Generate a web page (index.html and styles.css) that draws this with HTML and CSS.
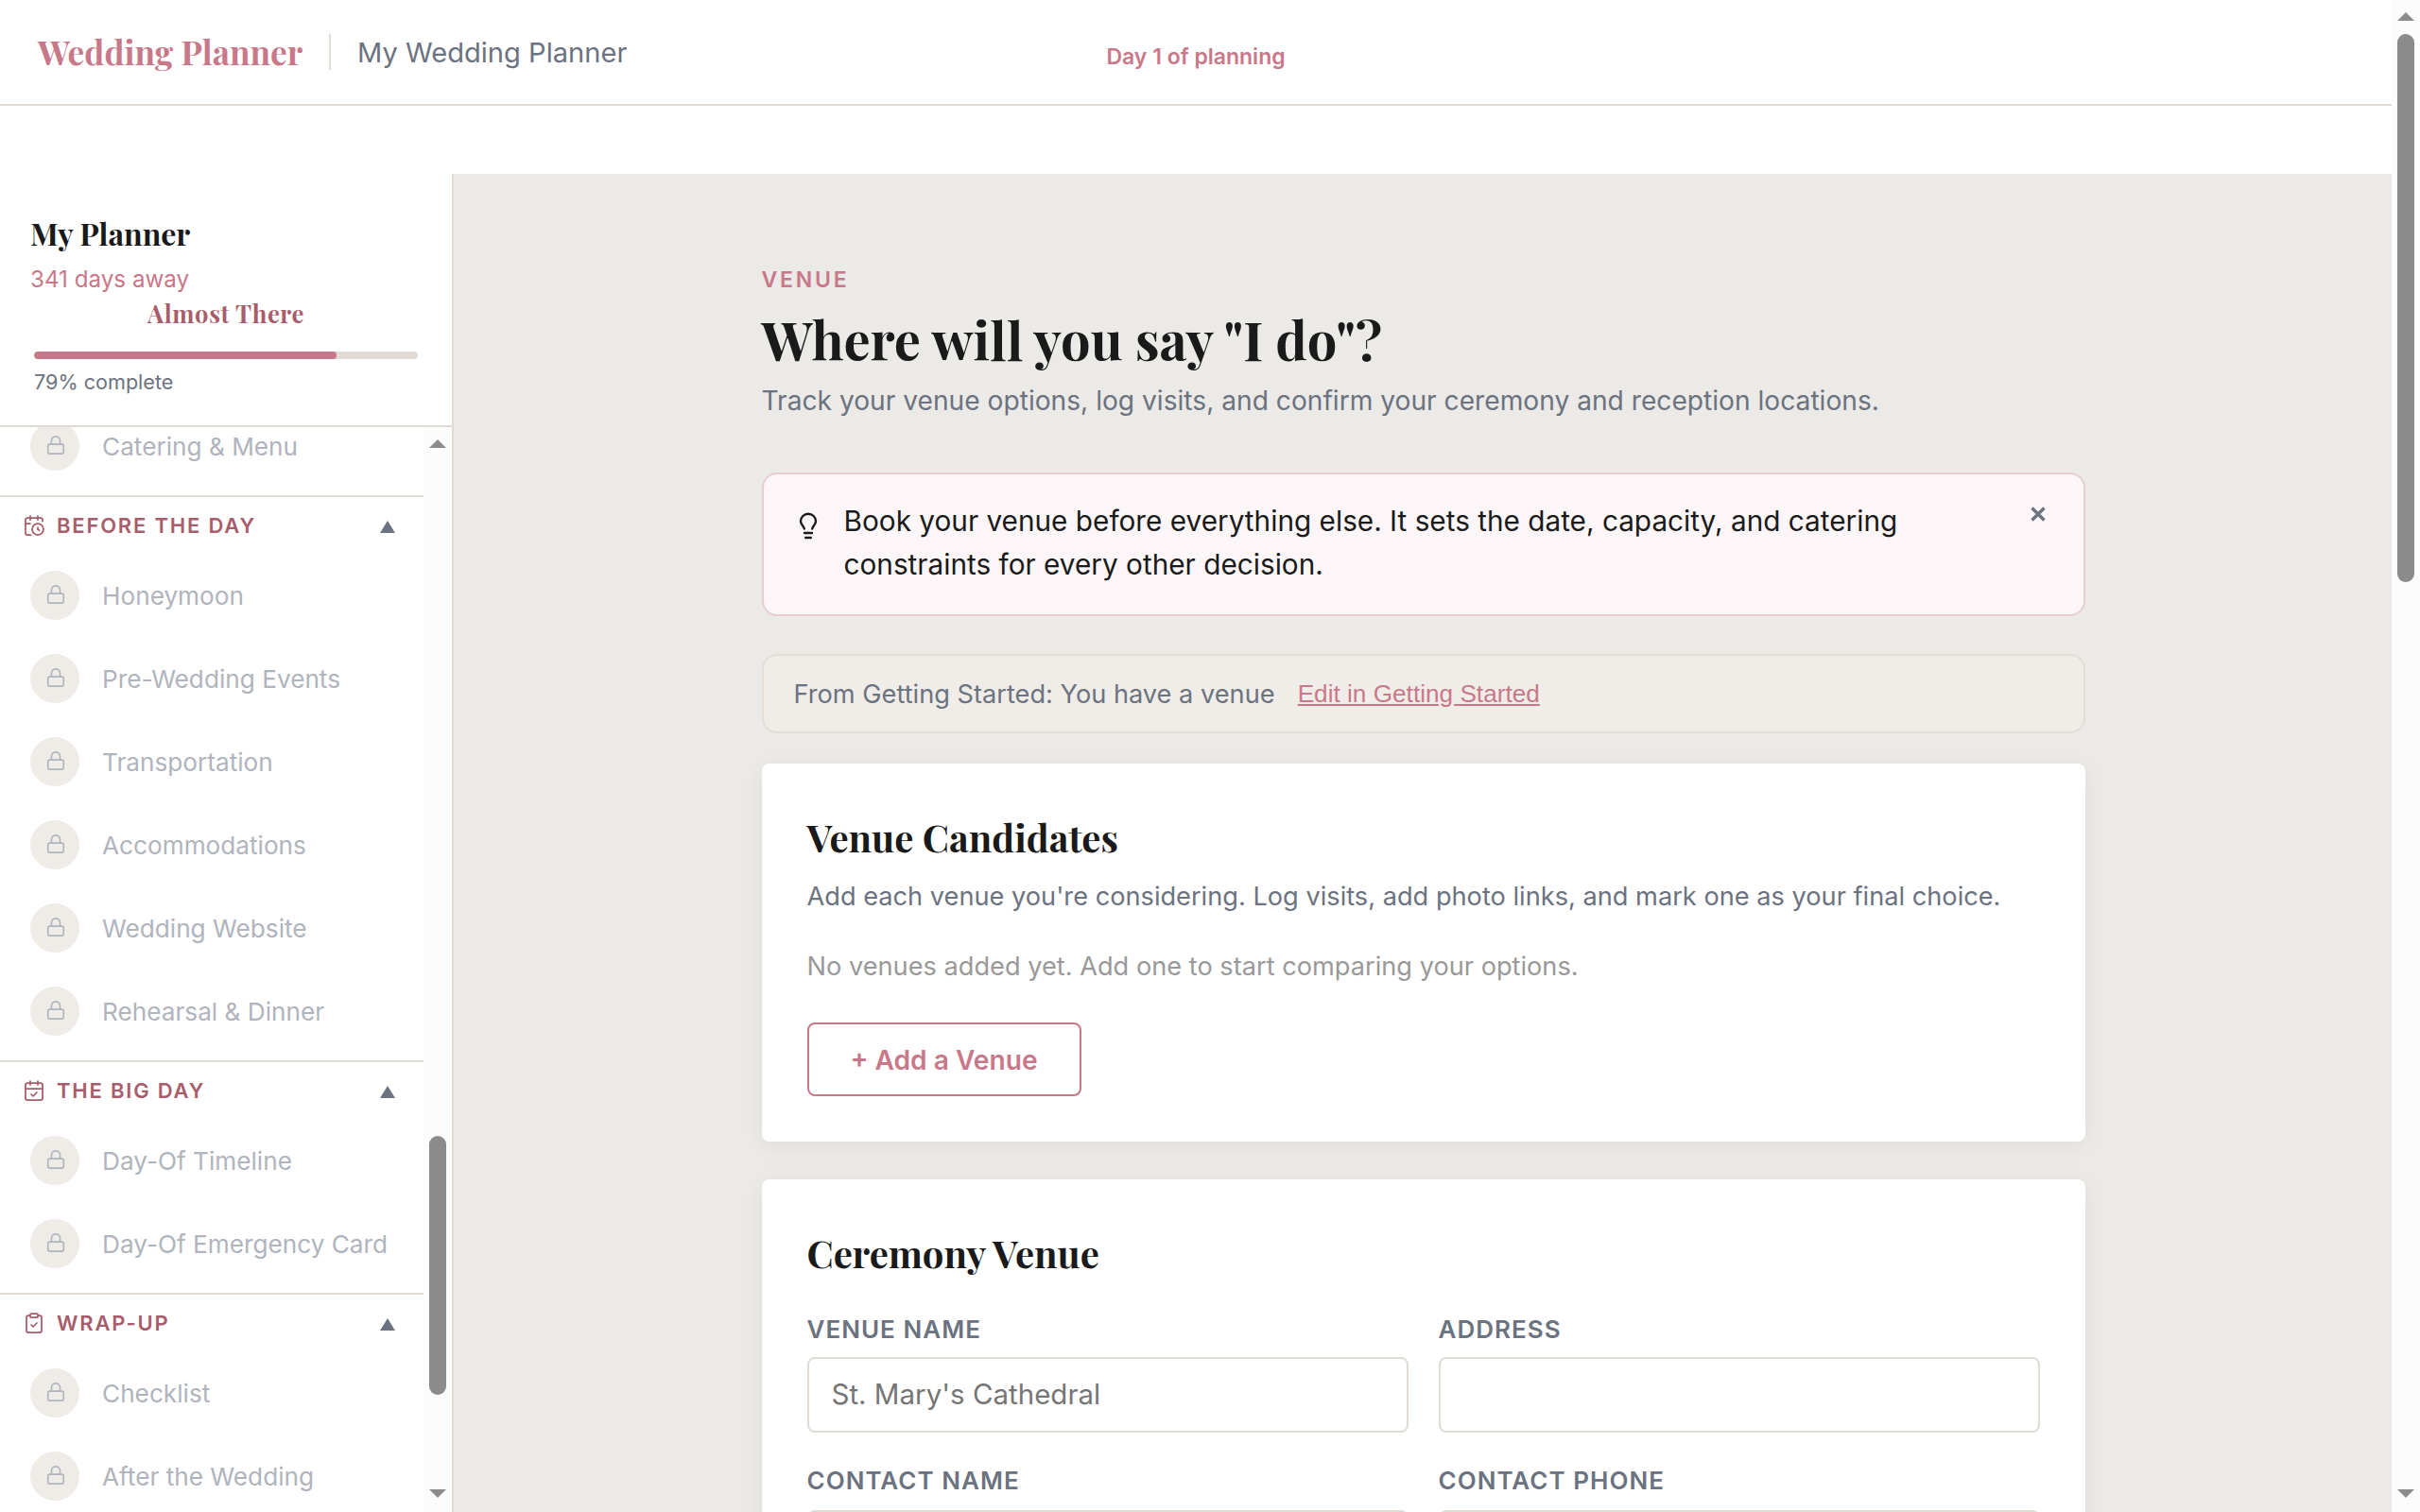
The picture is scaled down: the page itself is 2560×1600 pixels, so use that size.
FILE: index.html
```html
<!DOCTYPE html>
<html lang="en">
<head>
    <meta charset="UTF-8">
    <meta name="viewport" content="width=device-width, initial-scale=1.0">
    <title>Wedding Planner</title>
    <link rel="stylesheet" href="styles.css">
</head>
<body>

    <!-- Shared icons -->
    <svg class="icon-defs" xmlns="http://www.w3.org/2000/svg">
        <symbol id="icon-lock" viewBox="0 0 24 24">
            <rect x="3" y="11" width="18" height="11" rx="2"/>
            <path d="M7 11V7a5 5 0 0 1 10 0v4"/>
        </symbol>
    </svg>

    <div class="page">
        <div class="page-body">
            <header class="topbar">
                <div class="topbar-left">
                    <span class="brand">Wedding Planner</span>
                    <span class="topbar-divider"></span>
                    <span class="planner-name">My Wedding Planner</span>
                </div>
                <div class="day-count">Day 1 of planning</div>
                <div class="topbar-right"></div>
            </header>

            <div class="layout">
                <!-- Sidebar -->
                <aside class="sidebar">
                    <div class="sidebar-header">
                        <div class="sidebar-title">My Planner</div>
                        <div class="countdown">341 days away</div>
                        <div class="milestone">Almost There</div>
                        <div class="progress-bar"><div class="progress-fill" style="width: 78.8%"></div></div>
                        <div class="progress-label">79% complete</div>
                    </div>

                    <div class="sidebar-scroll">
                        <nav class="nav">
                            <div class="nav-group nav-group-cut">
                                <div class="nav-item"><span class="nav-badge"><svg class="icon-lock"><use href="#icon-lock"/></svg></span>Catering &amp; Menu</div>
                            </div>

                            <div class="nav-group">
                                <div class="group-header">
                                    <svg class="group-icon" viewBox="0 0 24 24">
                                        <path d="M16 14v2.2l1.6 1"/>
                                        <path d="M16 2v4"/>
                                        <path d="M21 7.5V6a2 2 0 0 0-2-2H5a2 2 0 0 0-2 2v14a2 2 0 0 0 2 2h3.5"/>
                                        <path d="M3 10h5"/>
                                        <path d="M8 2v4"/>
                                        <circle cx="16" cy="16" r="6"/>
                                    </svg>
                                    <span class="group-name">Before the Day</span>
                                    <span class="group-arrow"></span>
                                </div>
                                <div class="nav-item"><span class="nav-badge"><svg class="icon-lock"><use href="#icon-lock"/></svg></span>Honeymoon</div>
                                <div class="nav-item"><span class="nav-badge"><svg class="icon-lock"><use href="#icon-lock"/></svg></span>Pre-Wedding Events</div>
                                <div class="nav-item"><span class="nav-badge"><svg class="icon-lock"><use href="#icon-lock"/></svg></span>Transportation</div>
                                <div class="nav-item"><span class="nav-badge"><svg class="icon-lock"><use href="#icon-lock"/></svg></span>Accommodations</div>
                                <div class="nav-item"><span class="nav-badge"><svg class="icon-lock"><use href="#icon-lock"/></svg></span>Wedding Website</div>
                                <div class="nav-item"><span class="nav-badge"><svg class="icon-lock"><use href="#icon-lock"/></svg></span>Rehearsal &amp; Dinner</div>
                            </div>

                            <div class="nav-group">
                                <div class="group-header">
                                    <svg class="group-icon" viewBox="0 0 24 24">
                                        <path d="M8 2v4"/>
                                        <path d="M16 2v4"/>
                                        <rect x="3" y="4" width="18" height="18" rx="2"/>
                                        <path d="M3 10h18"/>
                                        <path d="m9 16 2 2 4-4"/>
                                    </svg>
                                    <span class="group-name">The Big Day</span>
                                    <span class="group-arrow"></span>
                                </div>
                                <div class="nav-item"><span class="nav-badge"><svg class="icon-lock"><use href="#icon-lock"/></svg></span>Day-Of Timeline</div>
                                <div class="nav-item"><span class="nav-badge"><svg class="icon-lock"><use href="#icon-lock"/></svg></span>Day-Of Emergency Card</div>
                            </div>

                            <div class="nav-group">
                                <div class="group-header">
                                    <svg class="group-icon" viewBox="0 0 24 24">
                                        <rect x="8" y="2" width="8" height="4" rx="1"/>
                                        <path d="M16 4h2a2 2 0 0 1 2 2v14a2 2 0 0 1-2 2H6a2 2 0 0 1-2-2V6a2 2 0 0 1 2-2h2"/>
                                        <path d="m9 14 2 2 4-4"/>
                                    </svg>
                                    <span class="group-name">Wrap-Up</span>
                                    <span class="group-arrow"></span>
                                </div>
                                <div class="nav-item"><span class="nav-badge"><svg class="icon-lock"><use href="#icon-lock"/></svg></span>Checklist</div>
                                <div class="nav-item"><span class="nav-badge"><svg class="icon-lock"><use href="#icon-lock"/></svg></span>After the Wedding</div>
                            </div>
                        </nav>
                        <div class="scrollbar">
                            <span class="scroll-up"></span>
                            <span class="scroll-thumb nav-thumb"></span>
                            <span class="scroll-down"></span>
                        </div>
                    </div>
                </aside>

                <!-- Main content -->
                <main class="main">
                    <div class="content">
                        <div class="eyebrow">Venue</div>
                        <h1 class="page-title">Where will you say "I do"?</h1>
                        <p class="page-subtitle">Track your venue options, log visits, and confirm your ceremony and reception locations.</p>

                        <div class="tip">
                            <svg class="tip-icon" viewBox="0 0 20 30">
                                <path d="M5.800 17.500C5.200 14.600 2 13.300 2 9.500a8 7.800 0 0 1 16 0c0 3.800-3.200 5.100-3.800 8"/>
                                <path d="M6 22h8"/>
                                <path d="M7.200 27h5.600"/>
                            </svg>
                            <p class="tip-text">Book your venue before everything else. It sets the date, capacity, and catering constraints for every other decision.</p>
                            <button class="tip-close" aria-label="Dismiss">
                                <svg viewBox="0 0 18 18"><path d="M2.500 2.500l13 13M15.500 2.500l-13 13"/></svg>
                            </button>
                        </div>

                        <div class="note">
                            <span class="note-text">From Getting Started: You have a venue</span>
                            <button class="note-link">Edit in Getting Started</button>
                        </div>

                        <section class="card">
                            <h2 class="card-title">Venue Candidates</h2>
                            <p class="card-text">Add each venue you're considering. Log visits, add photo links, and mark one as your final choice.</p>
                            <p class="card-empty">No venues added yet. Add one to start comparing your options.</p>
                            <button class="add-button">+ Add a Venue</button>
                        </section>

                        <section class="card">
                            <h2 class="card-title">Ceremony Venue</h2>
                            <div class="form-grid">
                                <div class="field">
                                    <label class="field-label" for="venue-name">Venue Name</label>
                                    <input class="field-input" id="venue-name" type="text" placeholder="St. Mary's Cathedral">
                                </div>
                                <div class="field">
                                    <label class="field-label" for="address">Address</label>
                                    <input class="field-input" id="address" type="text">
                                </div>
                                <div class="field">
                                    <label class="field-label" for="contact-name">Contact Name</label>
                                    <input class="field-input" id="contact-name" type="text">
                                </div>
                                <div class="field">
                                    <label class="field-label" for="contact-phone">Contact Phone</label>
                                    <input class="field-input" id="contact-phone" type="text">
                                </div>
                            </div>
                        </section>
                    </div>
                </main>
            </div>
        </div>

        <div class="scrollbar">
            <span class="scroll-up"></span>
            <span class="scroll-thumb page-thumb"></span>
            <span class="scroll-down"></span>
        </div>
    </div>

</body>
</html>
```
FILE: styles.css
```css
:root {
    --rose: #c9788a;
    --rose-dark: #a85d6c;
    --ink: #1a1a1a;
    --slate: #6b7280;
    --line: #e0dbd5;
    --sand: #ebeae6;
    --cream: #efebe6;
    --serif: 'Playfair Display', 'Liberation Serif', serif;
    --sans: 'Inter', 'Liberation Sans', sans-serif;
}

* {
    box-sizing: border-box;
}

body {
    margin: 0;
    font-family: var(--sans);
    color: var(--ink);
    background-color: #fff;
}

h1, h2, p {
    margin: 0;
}

button {
    border: none;
    background: none;
    padding: 0;
    cursor: pointer;
}

svg {
    fill: none;
    stroke: currentColor;
    stroke-linecap: round;
    stroke-linejoin: round;
}

.icon-defs {
    display: none;
}

.page {
    display: flex;
    height: 1600px;
    overflow: hidden;
}

.page-body {
    flex: 1;
    min-width: 0;
    display: flex;
    flex-direction: column;
}

/* Top bar */
.topbar {
    flex: none;
    display: grid;
    grid-template-columns: 1fr auto 1fr;
    align-items: center;
    height: 112px;
    margin-bottom: 72px;
    padding: 0 40px;
    border-bottom: 2px solid var(--line);
}

.topbar-left {
    display: flex;
    align-items: center;
}

.brand {
    padding-bottom: 2px;
    font-family: var(--serif);
    font-size: 35.2px;
    font-weight: bold;
    color: var(--rose);
}

.topbar-divider {
    width: 2px;
    height: 38px;
    margin: 0 28px;
    background-color: var(--line);
}

.planner-name {
    font-size: 29.1px;
    color: var(--slate);
}

.day-count {
    padding-top: 9px;
    font-size: 23px;
    font-weight: 600;
    color: var(--rose);
}

.layout {
    flex: 1;
    min-height: 0;
    display: flex;
}

/* Sidebar */
.sidebar {
    width: 480px;
    flex: none;
    display: flex;
    flex-direction: column;
    border-right: 2px solid var(--line);
}

.sidebar-header {
    height: 268px;
    flex: none;
    padding: 41px 32px 0;
    border-bottom: 2px solid var(--line);
}

.sidebar-title {
    font-family: var(--serif);
    font-size: 32px;
    font-weight: bold;
    line-height: 44px;
}

.countdown {
    margin-top: 10px;
    font-size: 24.2px;
    line-height: 34px;
    color: var(--rose);
}

.milestone {
    font-family: var(--serif);
    font-size: 25.6px;
    font-weight: bold;
    line-height: 36px;
    letter-spacing: 0.64px;
    text-align: center;
    color: var(--rose-dark);
}

.progress-bar {
    height: 8px;
    margin: 23px 4px 0;
    border-radius: 4px;
    background-color: var(--line);
    overflow: hidden;
}

.progress-fill {
    height: 100%;
    border-radius: 4px;
    background-color: var(--rose);
}

.progress-label {
    margin: 8px 4px 0;
    font-size: 21.6px;
    line-height: 32px;
    color: var(--slate);
}

.sidebar-scroll {
    flex: 1;
    min-height: 0;
    display: flex;
    overflow: hidden;
}

.nav {
    flex: 1;
}

.nav-group {
    padding-bottom: 8px;
    border-top: 2px solid var(--line);
}

.nav-group-cut {
    margin-top: -24px;
    border-top: none;
}

.group-header {
    display: flex;
    align-items: center;
    height: 60px;
    padding: 0 30px 0 24px;
    color: var(--rose-dark);
}

.group-icon {
    width: 24px;
    height: 24px;
    stroke-width: 1.75;
}

.group-name {
    flex: 1;
    margin-left: 12px;
    font-size: 22px;
    font-weight: 600;
    letter-spacing: 1.8px;
    text-transform: uppercase;
}

.group-arrow {
    margin-top: 3px;
    border: 8px solid transparent;
    border-top: none;
    border-bottom: 13px solid var(--slate);
}

.nav-item {
    display: flex;
    align-items: center;
    gap: 24px;
    height: 88px;
    padding-left: 32px;
    font-size: 26.2px;
    color: #afb4bd;
}

.nav-badge {
    display: flex;
    align-items: center;
    justify-content: center;
    width: 52px;
    height: 52px;
    padding: 0 0 2px 2px;
    border-radius: 50%;
    background-color: var(--cream);
}

.icon-lock {
    width: 22px;
    height: 22px;
    stroke-width: 1.75;
}

/* Scrollbars */
.scrollbar {
    width: 30px;
    flex: none;
    display: flex;
    flex-direction: column;
    align-items: center;
    padding: 13px 0 15px;
    background-color: #fcfcfc;
}

.scroll-up,
.scroll-down {
    border: 9px solid transparent;
}

.scroll-up {
    border-top: none;
    border-bottom-color: #8b8b8b;
}

.scroll-down {
    margin-top: auto;
    border-bottom: none;
    border-top-color: #8b8b8b;
}

.scroll-thumb {
    width: 18px;
    border-radius: 9px;
    background-color: #8b8b8b;
}

.page-thumb {
    height: 580px;
    margin-top: 14px;
}

.nav-thumb {
    height: 274px;
    margin-top: 728px;
}

/* Main content */
.main {
    flex: 1;
    padding-left: 325.5px;
    background-color: var(--sand);
}

.content {
    width: 1400px;
    padding-top: 96px;
}

.eyebrow {
    font-size: 23px;
    font-weight: 600;
    line-height: 32px;
    letter-spacing: 2.8px;
    text-transform: uppercase;
    color: var(--rose);
}

.page-title {
    margin-top: 11px;
    font-family: var(--serif);
    font-size: 56px;
    line-height: 72px;
}

.page-subtitle {
    margin-top: 7px;
    font-size: 28.16px;
    line-height: 44px;
    color: var(--slate);
}

.tip {
    display: flex;
    align-items: flex-start;
    height: 152px;
    margin-top: 54px;
    padding: 26px 38px 26px 37px;
    border: 2px solid #e8ccd2;
    border-radius: 16px;
    background-color: #fcf6f8;
}

.tip-icon {
    width: 20px;
    height: 30px;
    margin-top: 14px;
    stroke-width: 2.4;
}

.tip-text {
    width: 1200px;
    margin-left: 28px;
    font-size: 29.76px;
    line-height: 46px;
}

.tip-close {
    width: 18px;
    height: 18px;
    margin: 7px 1px 0 auto;
    color: var(--slate);
}

.tip-close svg {
    display: block;
    width: 18px;
    height: 18px;
    stroke-width: 3.4;
    stroke-linecap: butt;
}

.note {
    display: flex;
    align-items: center;
    height: 84px;
    margin-top: 40px;
    padding: 0 32px;
    border: 2px solid #e3ddd6;
    border-radius: 16px;
    background-color: #f0ede8;
}

.note-text {
    font-size: 27.2px;
    color: var(--slate);
}

.note-link {
    margin-left: 24px;
    font-family: 'Liberation Sans', Arial, sans-serif;
    font-size: 26.2px;
    text-decoration: underline;
    color: var(--rose);
}

/* Cards */
.card {
    margin-top: 32px;
    padding: 48px;
    border-radius: 8px;
    background-color: #fff;
    box-shadow: 0 4px 24px rgba(0, 0, 0, 0.06);
}

.card + .card {
    margin-top: 40px;
}

.card-title {
    font-family: var(--serif);
    font-size: 40px;
    line-height: 60px;
}

.card-text {
    margin-top: 11px;
    font-size: 27.2px;
    line-height: 44px;
    color: var(--slate);
}

.card-empty {
    margin-top: 30px;
    font-size: 27.2px;
    line-height: 44px;
    color: #999;
}

.add-button {
    display: block;
    width: 290px;
    height: 78px;
    margin-top: 37px;
    padding-top: 2px;
    border: 2px solid var(--rose);
    border-radius: 8px;
    font-family: var(--sans);
    font-size: 28.16px;
    font-weight: 600;
    color: var(--rose);
}

.form-grid {
    display: grid;
    grid-template-columns: 1fr 1fr;
    gap: 31px 32px;
    margin-top: 31px;
}

.field-label {
    display: block;
    margin-bottom: 9px;
    font-size: 26px;
    font-weight: 600;
    line-height: 40px;
    letter-spacing: 1.02px;
    text-transform: uppercase;
    color: var(--slate);
}

.field:nth-child(n+3) .field-label {
    margin-bottom: 11px;
}

.field-input {
    display: block;
    width: 100%;
    height: 80px;
    padding: 0 24px 2px;
    border: 2px solid var(--line);
    border-radius: 8px;
    font-family: var(--sans);
    font-size: 29.5px;
    background-color: #fff;
}

.field-input::placeholder {
    color: #757575;
}
```
